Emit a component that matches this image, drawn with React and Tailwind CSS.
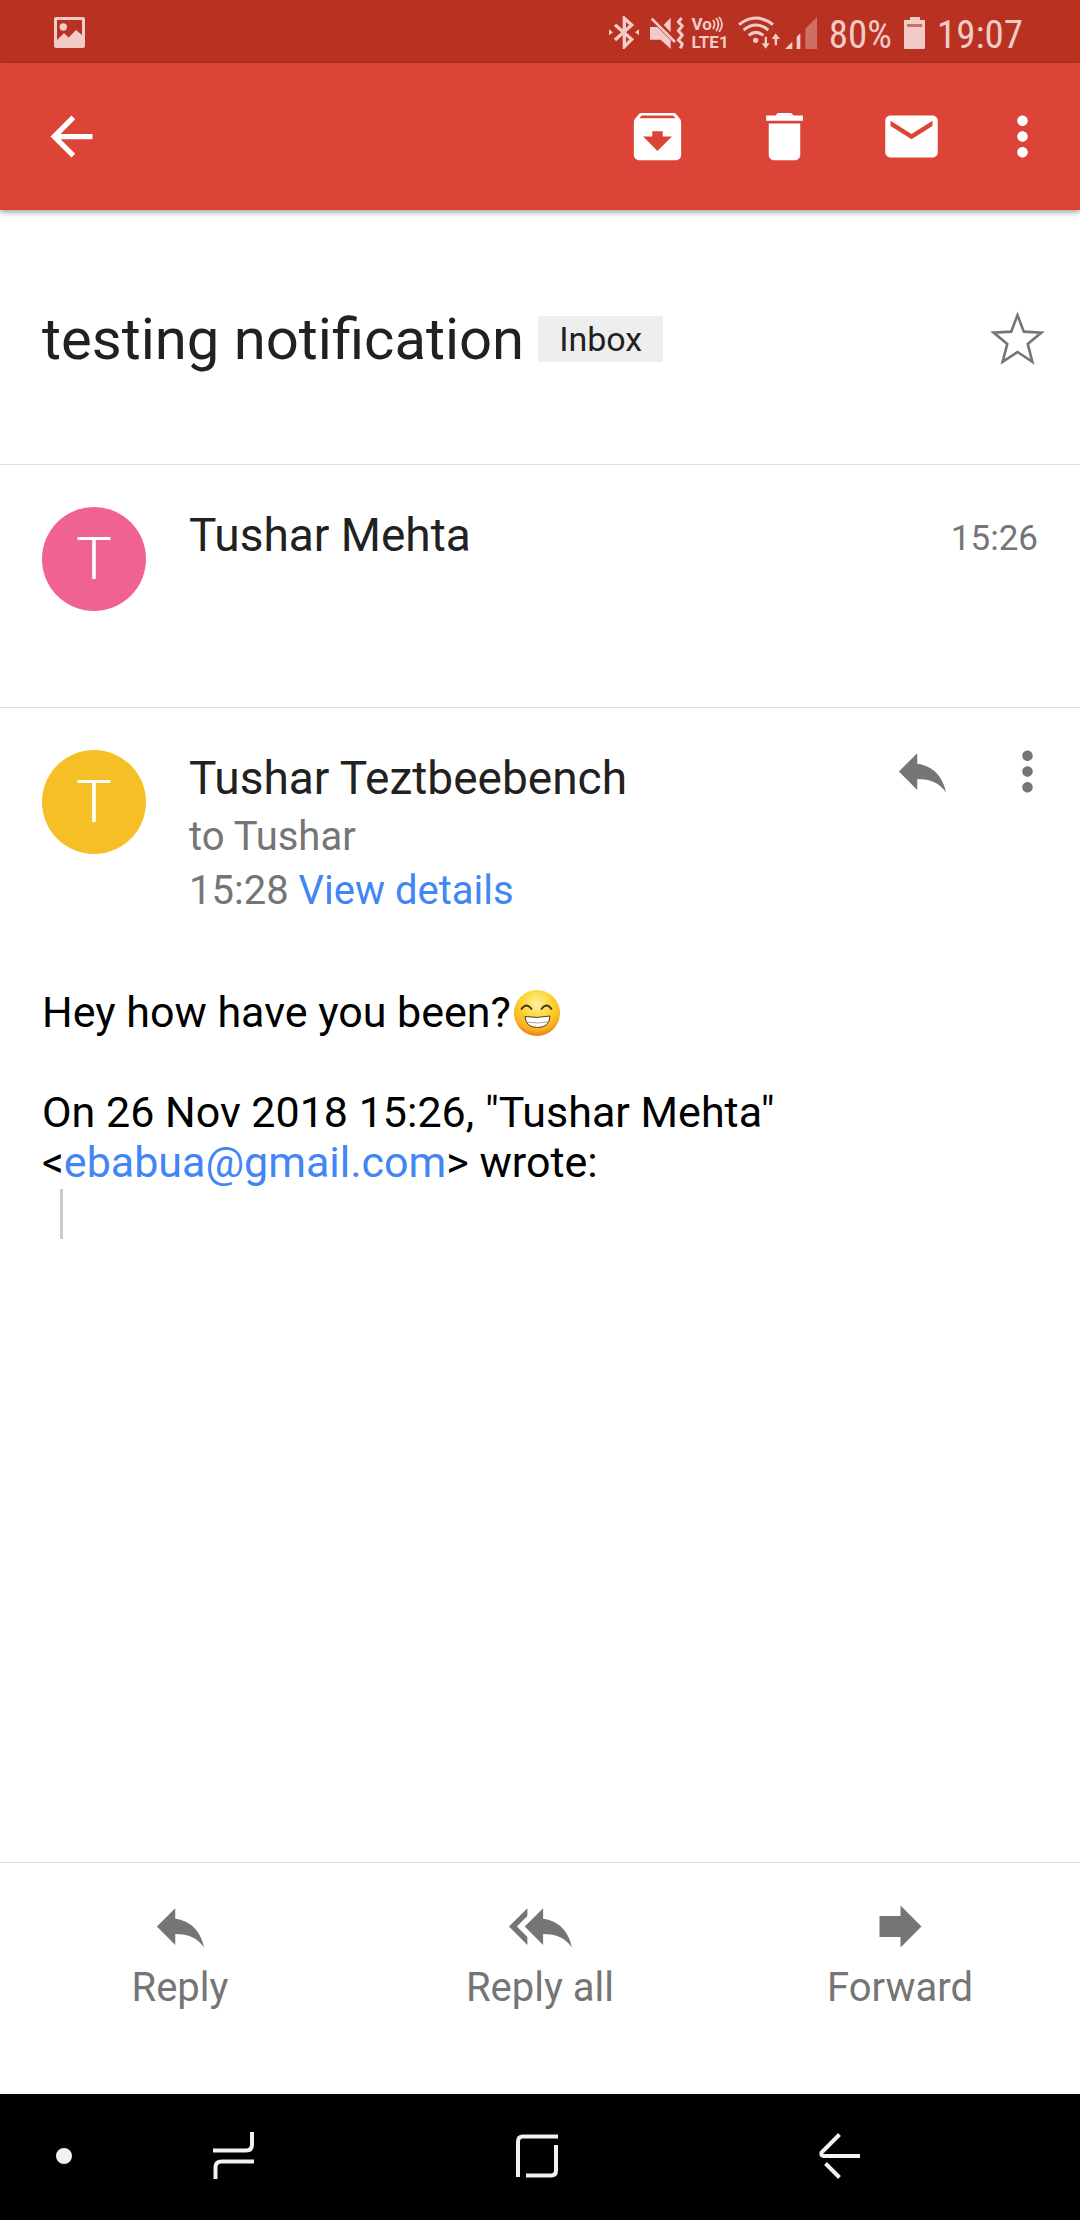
import React, { useState } from "react";

const ICONS = {
  back: "M20 11H7.83l5.59-5.59L12 4l-8 8 8 8 1.41-1.41L7.83 13H20v-2z",
  archive:
    "M20.54 5.23l-1.39-1.68C18.88 3.21 18.47 3 18 3H6c-.47 0-.88.21-1.16.55L3.46 5.23C3.17 5.57 3 6.02 3 6.5V19c0 1.1.9 2 2 2h14c1.1 0 2-.9 2-2V6.5c0-.48-.17-.93-.46-1.27zM12 17.5L6.5 12H10v-2h4v2h3.5L12 17.5zM5.12 5l.81-1h12l.94 1H5.12z",
  trash:
    "M6 19c0 1.1.9 2 2 2h8c1.1 0 2-.9 2-2V7H6v12zM19 4h-3.5l-1-1h-5l-1 1H5v2h14V4z",
  mail: "M20 4H4c-1.1 0-1.99.9-1.99 2L2 18c0 1.1.9 2 2 2h16c1.1 0 2-.9 2-2V6c0-1.1-.9-2-2-2zm0 4l-8 5-8-5V6l8 5 8-5v2z",
  more: "M12 8c1.1 0 2-.9 2-2s-.9-2-2-2-2 .9-2 2 .9 2 2 2zm0 2c-1.1 0-2 .9-2 2s.9 2 2 2 2-.9 2-2-.9-2-2-2zm0 6c-1.1 0-2 .9-2 2s.9 2 2 2 2-.9 2-2-.9-2-2-2z",
  reply: "M10 9V5l-7 7 7 7v-4.1c5 0 8.5 1.6 11 5.1-1-5-4-10-11-11z",
  replyAll:
    "M7 8V5l-7 7 7 7v-3l-4-4 4-4zm6 1V5l-7 7 7 7v-4.1c5 0 8.5 1.6 11 5.1-1-5-4-10-11-11z",
  forward: "M12 8V4l8 8-8 8v-4H4V8z",
};

const Icon = ({ name }) => (
  <svg viewBox="0 0 24 24" className="size-[63px]" fill="currentColor" aria-hidden="true">
    <path d={ICONS[name]} />
  </svg>
);

const IconButton = ({ name, label }) => (
  <button type="button" aria-label={label} className="shrink-0 cursor-pointer">
    <Icon name={name} />
  </button>
);

const StatusBar = () => (
  <div className="flex h-[63px] items-center justify-between bg-[#b93221] pt-[2px] pr-[57px] pl-[54px] text-[#f0cbc8]">
    <svg viewBox="0 0 31 31" className="size-[31px]" aria-hidden="true">
      <path
        fill="currentColor"
        fillRule="evenodd"
        d="M2 0h27a2 2 0 0 1 2 2v27a2 2 0 0 1-2 2H2a2 2 0 0 1-2-2V2a2 2 0 0 1 2-2zM3 3v20l7-7 4.500 4.500L22 13l6 5V3z"
      />
      <circle cx="9.300" cy="10" r="3.700" fill="currentColor" />
    </svg>
    <div className="flex items-center">
      <svg viewBox="54 48 90 99" className="h-[33px] w-[30px]" aria-hidden="true">
        <path
          d="M72 74l50 44-22 22V55l22 20-50 45"
          fill="none"
          stroke="currentColor"
          strokeWidth="10"
        />
        <path d="M54 88l12 9-12 9zM144 88l-12 9 12 9z" fill="currentColor" />
      </svg>
      <svg viewBox="177 50 102 96" className="ml-[11px] h-8 w-[34px]" aria-hidden="true">
        <path
          d="M177 80h22l40 40v26l-30-28h-32zM218 74l21-22v44z"
          fill="currentColor"
        />
        <path d="M182 55l70 70" stroke="currentColor" strokeWidth="8" />
        <path
          d="M272 53l-10 12 12 12-12 14 12 14-12 14 12 12-6 13"
          fill="none"
          stroke="currentColor"
          strokeWidth="9"
          strokeLinejoin="round"
        />
      </svg>
      <div className="ml-2 flex flex-col text-[17px] leading-[18px] font-bold">
        <span className="flex items-center">
          Vo
          <svg viewBox="0 0 11 16" className="h-4 w-[11px]" aria-hidden="true">
            <path
              d="M1 4q3 4 0 9M4 2q5 6 0 13M7 1q6 7 0 15"
              fill="none"
              stroke="currentColor"
              strokeWidth="1.800"
            />
          </svg>
        </span>
        <span>LTE1</span>
      </div>
      <svg viewBox="453 48 126 99" className="ml-[9px] h-[33px] w-[42px]" aria-hidden="true">
        <path
          d="M456 74q50-40 102 0M470 90q37-30 74 0M485 106q22-18 44 0"
          fill="none"
          stroke="currentColor"
          strokeWidth="9"
        />
        <circle cx="506" cy="121" r="8" fill="currentColor" />
        <path
          d="M533 110h7v20h8l-12 16-12-16h9zM563 136h7v-19h9l-13-17-12 17h9z"
          fill="currentColor"
        />
      </svg>
      <svg viewBox="594 50 96 96" className="ml-[5px] size-8" aria-hidden="true">
        <path d="M594 146l22-22v22zM629 110l11-11v47h-11z" fill="currentColor" />
        <path d="M655 85l35-35v96h-35z" fill="currentColor" opacity=".4" />
      </svg>
      <span className="ml-3 pt-1 font-['Roboto_Condensed',Roboto,sans-serif] text-[39px] leading-[44px]">
        80%
      </span>
      <svg viewBox="0 0 21 32" className="ml-3 h-8 w-[21px]" aria-hidden="true">
        <path d="M6 0h10v3h5v28a1 1 0 0 1-1 1H1a1 1 0 0 1-1-1V3h6z" fill="currentColor" />
        <path d="M3 7h15v3H3z" fill="#cc6f65" />
      </svg>
      <span className="ml-3 pt-1 font-['Roboto_Condensed',Roboto,sans-serif] text-[39px] leading-[44px]">
        19:07
      </span>
    </div>
  </div>
);

const AppBar = () => (
  <header className="flex h-[147px] items-center bg-[#db4437] pr-[26px] pl-10 text-white shadow-[0_2px_6px_rgba(0,0,0,0.4)]">
    <IconButton name="back" label="Navigate up" />
    <div className="ml-auto flex items-center gap-16">
      <IconButton name="archive" label="Archive" />
      <IconButton name="trash" label="Delete" />
      <div className="flex items-center gap-12">
        <IconButton name="mail" label="Mark unread" />
        <IconButton name="more" label="More options" />
      </div>
    </div>
  </header>
);

const Subject = () => {
  const [starred, setStarred] = useState(false);

  return (
    <div className="flex h-[254px] items-center pt-[3px] pr-[31px] pl-[42px]">
      <h1 className="text-[58px] leading-[70px]">testing notification</h1>
      <span className="ml-[14px] rounded-[2px] bg-[#eeeeee] px-[21px] text-[34px] leading-[46px]">
        Inbox
      </span>
      <button
        type="button"
        aria-label="Star"
        aria-pressed={starred}
        onClick={() => setStarred(!starred)}
        className="ml-auto cursor-pointer text-[#757575]"
      >
        <svg viewBox="0 0 24 24" className="size-[63px]" aria-hidden="true">
          <path
            d="M12 3.100l2.400 6.300 6.700.35-5.200 4.300 1.750 6.800L12 17.150 6.350 20.850l1.750-6.800L2.900 9.750l6.700-.35z"
            fill={starred ? "currentColor" : "none"}
            stroke="currentColor"
            strokeWidth="1"
          />
        </svg>
      </button>
    </div>
  );
};

const Avatar = ({ color }) => (
  <div
    className={`flex size-[104px] shrink-0 items-center justify-center rounded-full text-[60px] font-light text-white ${color}`}
  >
    T
  </div>
);

const GrinEmoji = () => (
  <svg
    viewBox="0 0 48 48"
    className="ml-[2px] inline-block size-12 align-[-10px]"
    role="img"
    aria-label="grinning face"
  >
    <defs>
      <radialGradient id="face" cx=".5" cy=".3" r=".72">
        <stop offset="0" stopColor="#fff0a0" />
        <stop offset=".45" stopColor="#fdd535" />
        <stop offset=".8" stopColor="#f9b01e" />
        <stop offset="1" stopColor="#e2710f" />
      </radialGradient>
    </defs>
    <circle cx="24" cy="24" r="23" fill="url(#face)" />
    <path
      d="M8.500 20q5-7 10 0M28.500 20q5-7 10 0"
      fill="none"
      stroke="#4a3410"
      strokeWidth="1.800"
      strokeLinecap="round"
    />
    <path
      d="M12 27.500q12 2 25-.5-.5 11.500-12.500 11.500T12 27.500z"
      fill="#fff"
      stroke="#5a3c10"
      strokeWidth="1"
    />
    <path d="M14 33q10 2 21 0" fill="none" stroke="#a8a8a8" strokeWidth="1" />
  </svg>
);

const Message = ({ sender, color, children, aside }) => (
  <div className="flex border-t border-[#dedede] px-[42px] pt-[42px]">
    <Avatar color={color} />
    <div className="ml-[43px] flex-1">
      <h2 className="text-[46px] leading-[56px]">{sender}</h2>
      {children}
    </div>
    {aside}
  </div>
);

const actions = [
  { icon: "reply", label: "Reply" },
  { icon: "replyAll", label: "Reply all" },
  { icon: "forward", label: "Forward" },
];

const ActionBar = () => (
  <footer className="grid grid-cols-3 border-t border-[#dedede] pt-8 pb-[81px] text-[#757575]">
    {actions.map(({ icon, label }) => (
      <button
        key={label}
        type="button"
        className="flex cursor-pointer flex-col items-center gap-[5px] text-[40px] leading-[50px]"
      >
        <Icon name={icon} />
        {label}
      </button>
    ))}
  </footer>
);

const NavButton = ({ label, d }) => (
  <button type="button" aria-label={label} className="flex flex-1 cursor-pointer justify-center">
    <svg viewBox="0 0 48 48" className="size-12" aria-hidden="true">
      <path d={d} fill="none" stroke="currentColor" strokeWidth="4" />
    </svg>
  </button>
);

const NavBar = () => (
  <nav className="flex h-[126px] items-center bg-black pr-[89px] pb-[3px] text-[#f2f2f2]">
    <div className="flex w-[83px] justify-end pr-[11px]">
      <span className="size-4 rounded-full bg-[#f2f2f2]" />
    </div>
    <NavButton
      label="Recent apps"
      d="M3 18.500H36Q42 18.500 42 12.500V0M44 29.500H11.500Q5.500 29.500 5.500 35.500V47"
    />
    <NavButton
      label="Home"
      d="M5 45V9.500Q5 4.500 10 4.500H45M43 13V38.500Q43 43.500 38 43.500H13"
    />
    <NavButton
      label="Back"
      d="M23.500 2.500L5.500 20.500Q4.500 24 8 24H44M9.500 31.500L23.500 45.500"
    />
  </nav>
);

export default function App() {
  return (
    <div className="flex min-h-screen flex-col bg-white font-[Roboto,sans-serif] text-[#212121]">
      <StatusBar />
      <AppBar />
      <main className="flex-1">
        <Subject />
        <div className="min-h-[243px]">
          <Message
            sender="Tushar Mehta"
            color="bg-[#f06292]"
            aside={
              <time className="text-[35px] leading-[64px] text-[#757575]">15:26</time>
            }
          />
        </div>
        <Message
          sender="Tushar Teztbeebench"
          color="bg-[#f6bf26]"
          aside={
            <div className="-mt-2.5 -mr-[21px] flex items-start gap-[42px] text-[#757575]">
              <IconButton name="reply" label="Reply" />
              <IconButton name="more" label="More options" />
            </div>
          }
        >
          <div className="mt-1 text-[40px] leading-[54px] text-[#757575]">
            <p>to Tushar</p>
            <p>
              15:28{" "}
              <a href="#details" className="text-[#4285f4]">
                View details
              </a>
            </p>
          </div>
        </Message>
        <article className="px-[42px] pt-[69px] text-[43px] leading-[50px] text-black">
          <p className="h-[50px]">
            Hey how have you been?
            <GrinEmoji />
          </p>
          <p className="mt-[50px]">
            On 26 Nov 2018 15:26, "Tushar Mehta"
            <br />
            &lt;
            <a href="mailto:ebabua@gmail.com" className="text-[#4285f4]">
              ebabua@gmail.com
            </a>
            &gt; wrote:
          </p>
          <blockquote className="mt-[2px] ml-[18px] h-[50px] border-l-[3px] border-[#cccccc]" />
        </article>
      </main>
      <ActionBar />
      <NavBar />
    </div>
  );
}
